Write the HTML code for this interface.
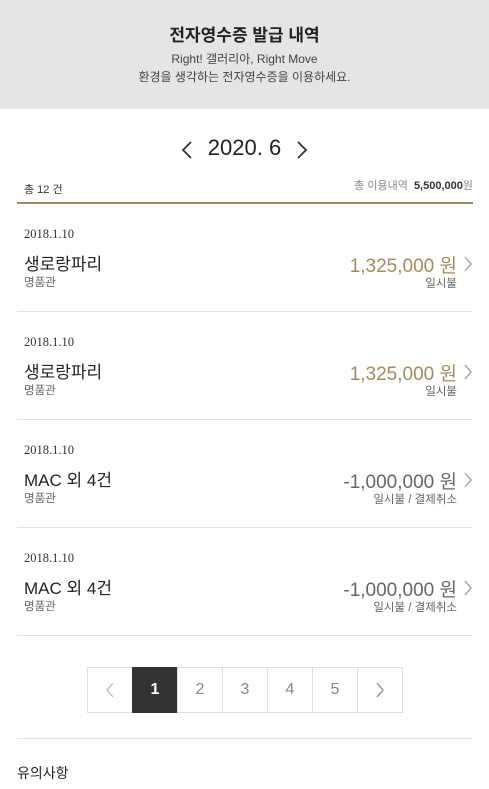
<!DOCTYPE html><html><head><meta charset="utf-8"><style>
*{margin:0;padding:0;box-sizing:border-box}
body{width:489px;height:789px;overflow:hidden;background:#fff;font-family:"Liberation Sans","Noto Sans CJK KR",sans-serif;color:#222;position:relative}
.hd{position:absolute;left:0;top:0;width:489px;height:109px;background:#e5e5e5;text-align:center}
.hd h1{position:absolute;top:21px;width:100%;font-size:17px;font-weight:bold;color:#222}
.hd p{position:absolute;width:100%;font-size:12px;color:#444}
.a{position:absolute}
.it{position:absolute;left:17px;width:456px;height:108px;border-bottom:1px solid #e2e2e2}
.it .d{position:absolute;top:23px;left:7px;font-family:"Liberation Serif",serif;font-size:12.5px;color:#333}
.it .n{position:absolute;top:46px;left:7px;font-size:17px;color:#222}
.it .s{position:absolute;top:70px;left:7px;font-size:11.5px;color:#666}
.it .m{position:absolute;top:47px;right:16px;font-size:19px;color:#a58a5e}
.it .m.g{color:#666}
.it .t{position:absolute;top:71px;right:16px;font-size:11.5px;color:#666}
.it svg{position:absolute;right:0;top:52px}
.pg{position:absolute;left:87px;top:667px;display:flex}
.pg div{width:46px;height:46px;border:1px solid #e0e0e0;margin-left:-1px;display:flex;align-items:center;justify-content:center;font-size:16px;color:#888}
.pg .on{background:#333;color:#fff;font-weight:bold;border-color:#333}
</style></head><body>
<div class="hd"><h1>전자영수증 발급 내역</h1>
<p style="top:50px">Right! 갤러리아, Right Move</p>
<p style="top:68px">환경을 생각하는 전자영수증을 이용하세요.</p></div>
<div class="a" style="left:0;width:489px;top:135px;text-align:center;font-size:22px;color:#222">2020. 6</div>
<svg class="a" style="left:181px;top:140px" width="12" height="20"><path d="M10 2L2 10L10 18" stroke="#333" stroke-width="1.8" fill="none"/></svg>
<svg class="a" style="left:296px;top:140px" width="12" height="20"><path d="M2 2L10 10L2 18" stroke="#333" stroke-width="1.8" fill="none"/></svg>
<div class="a" style="left:24px;top:181px;font-size:11px;color:#333">총 12 건</div>
<div class="a" style="right:16px;top:177px;font-size:11px;color:#888">총 이용내역 &nbsp;<b style="color:#333">5,500,000</b><span style="color:#888">원</span></div>
<div class="a" style="left:17px;top:202px;width:456px;height:2px;background:#a08a64"></div>
<div class="it" style="top:204px"><div class="d">2018.1.10</div><div class="n">생로랑파리</div><div class="s">명품관</div><div class="m">1,325,000 원</div><div class="t">일시불</div><svg width="10" height="16"><path d="M2 1L8 8L2 15" stroke="#aaa" stroke-width="1.6" fill="none"/></svg></div>
<div class="it" style="top:312px"><div class="d">2018.1.10</div><div class="n">생로랑파리</div><div class="s">명품관</div><div class="m">1,325,000 원</div><div class="t">일시불</div><svg width="10" height="16"><path d="M2 1L8 8L2 15" stroke="#aaa" stroke-width="1.6" fill="none"/></svg></div>
<div class="it" style="top:420px"><div class="d">2018.1.10</div><div class="n">MAC 외 4건</div><div class="s">명품관</div><div class="m g">-1,000,000 원</div><div class="t">일시불 / 결제취소</div><svg width="10" height="16"><path d="M2 1L8 8L2 15" stroke="#aaa" stroke-width="1.6" fill="none"/></svg></div>
<div class="it" style="top:528px"><div class="d">2018.1.10</div><div class="n">MAC 외 4건</div><div class="s">명품관</div><div class="m g">-1,000,000 원</div><div class="t">일시불 / 결제취소</div><svg width="10" height="16"><path d="M2 1L8 8L2 15" stroke="#aaa" stroke-width="1.6" fill="none"/></svg></div>
<div class="pg"><div style="margin-left:0"><svg width="10" height="16"><path d="M8 1L2 8L8 15" stroke="#bbb" stroke-width="1.3" fill="none"/></svg></div><div class="on">1</div><div>2</div><div>3</div><div>4</div><div>5</div><div><svg width="10" height="16"><path d="M2 1L8 8L2 15" stroke="#888" stroke-width="1.3" fill="none"/></svg></div></div>
<div class="a" style="left:17px;top:738px;width:456px;height:1px;background:#e2e2e2"></div>
<div class="a" style="left:17px;top:763px;font-size:14px;color:#222">유의사항</div>
</body></html>
